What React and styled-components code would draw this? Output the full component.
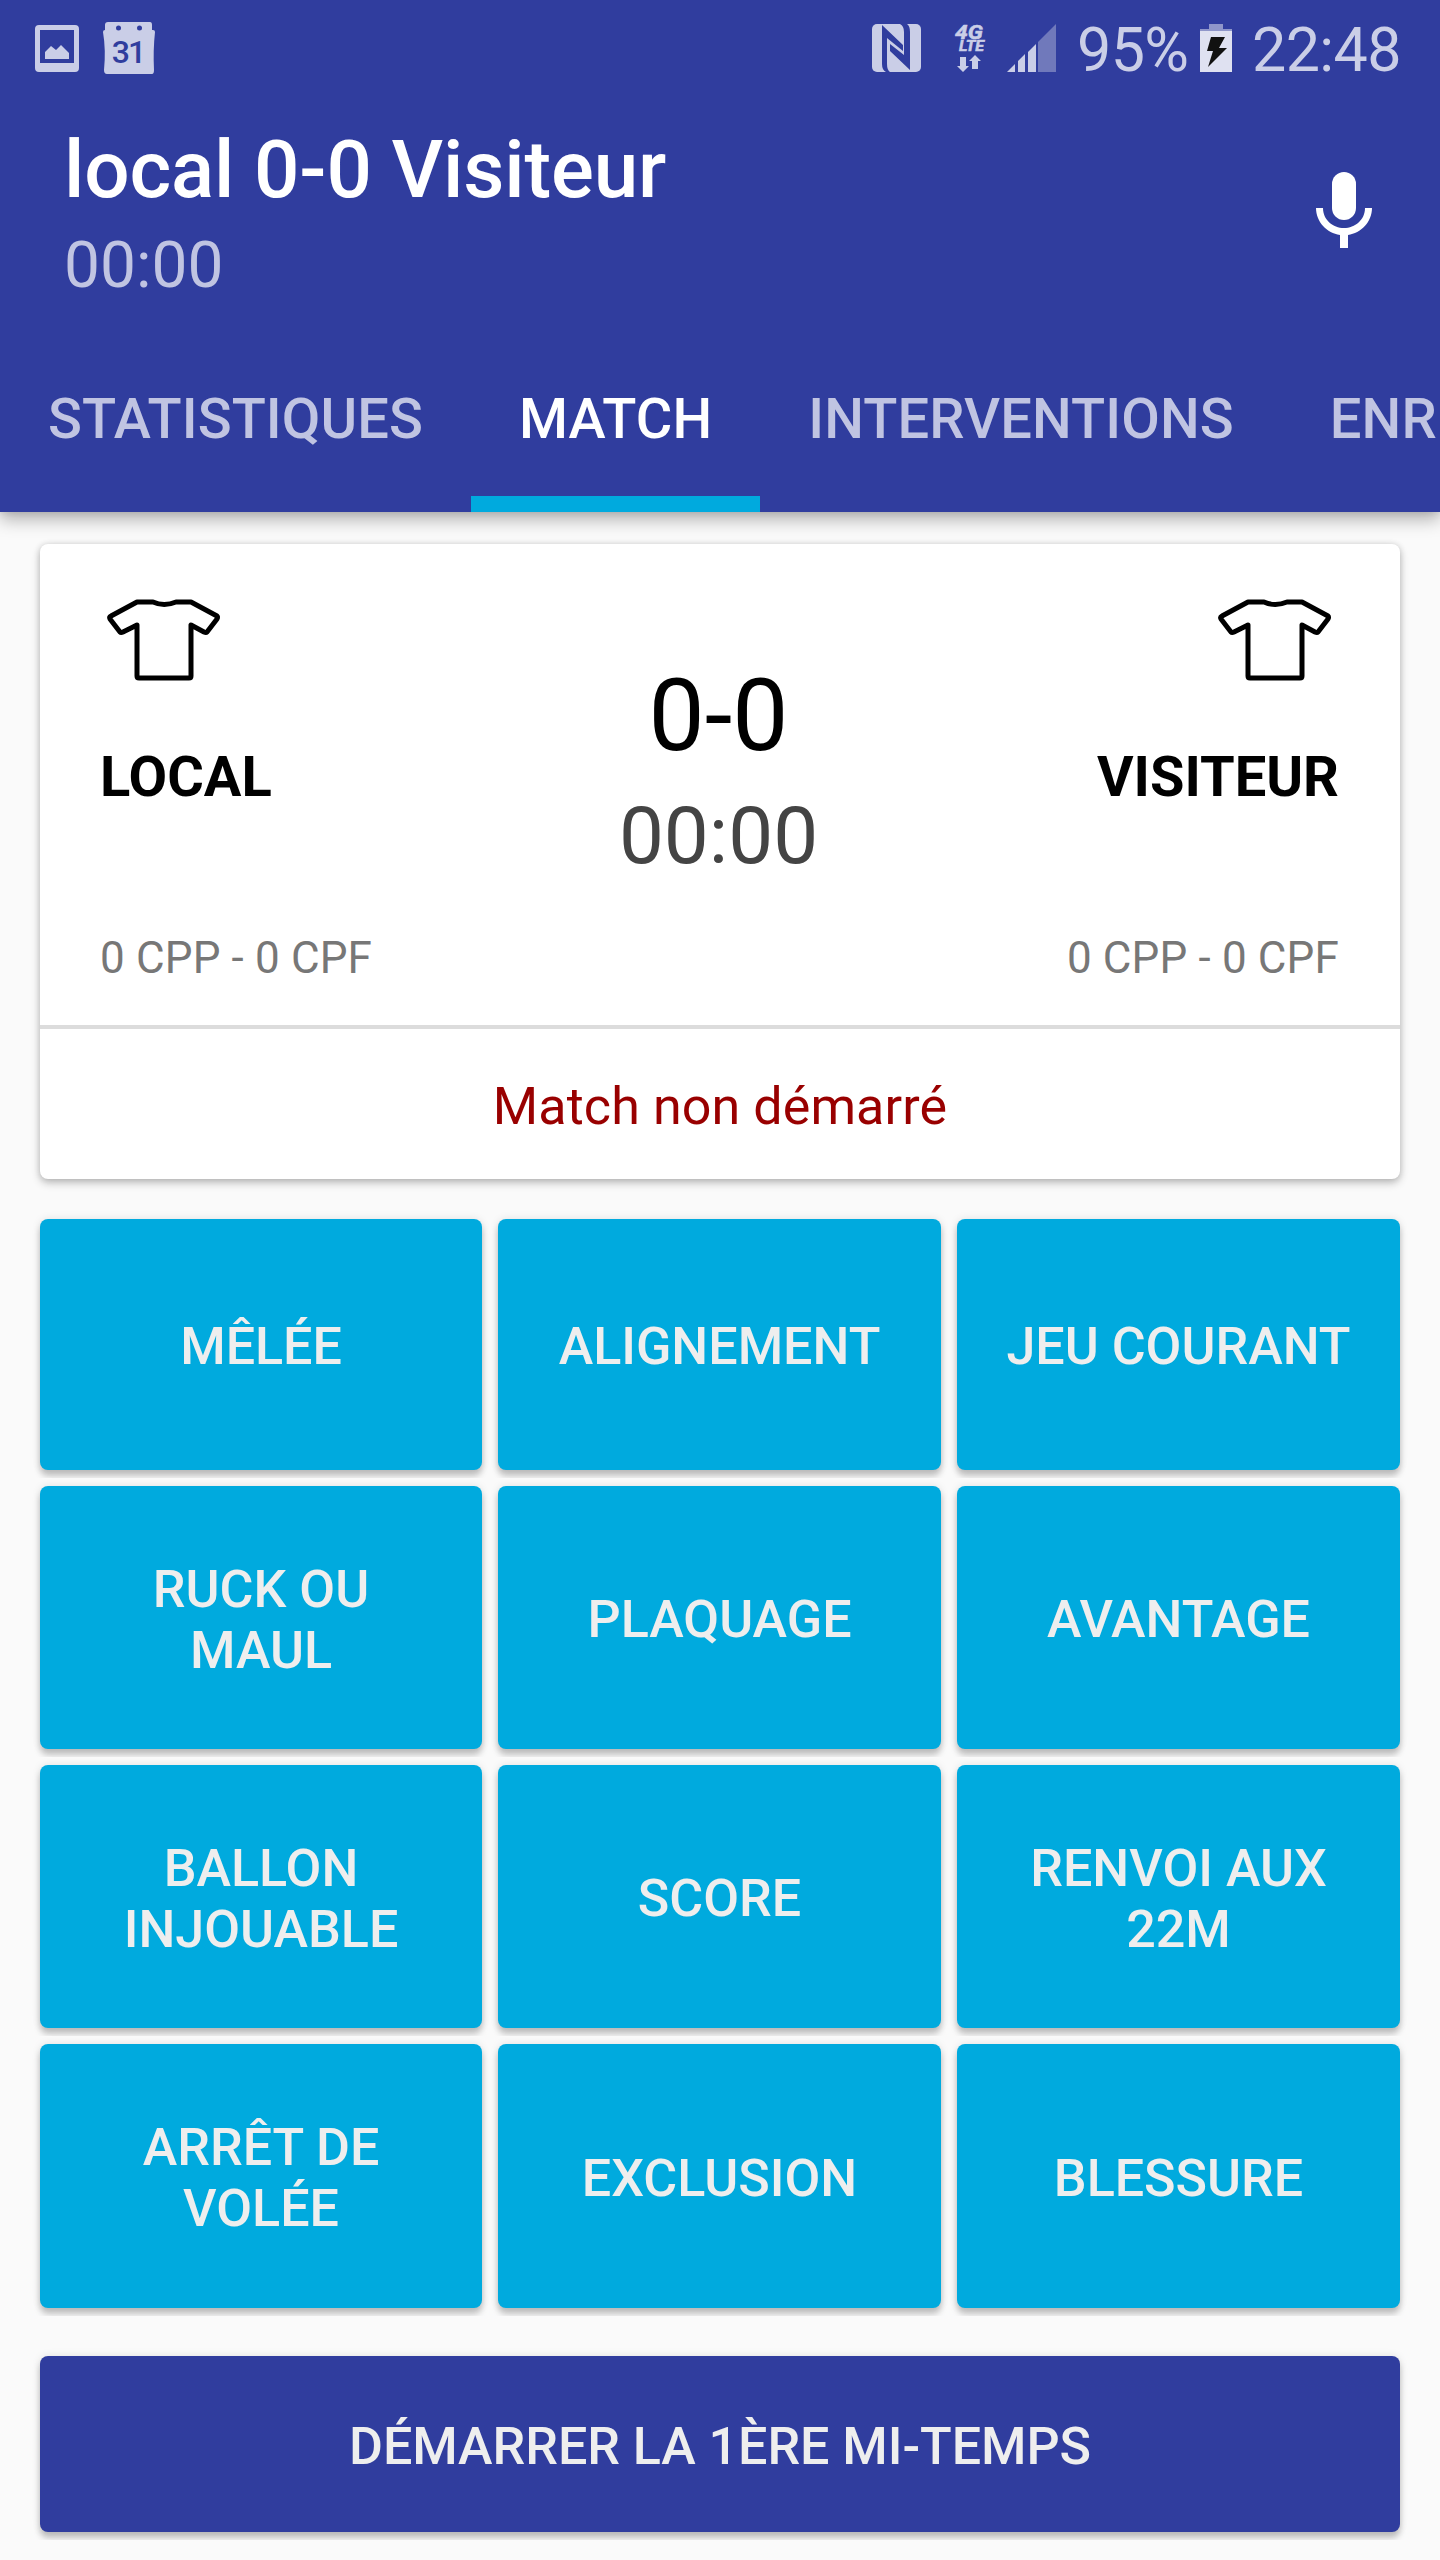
import React, { useState } from "react";
import styled, { createGlobalStyle } from "styled-components";

const GlobalStyle = createGlobalStyle`
  * {
    box-sizing: border-box;
  }

  body {
    margin: 0;
    background: #fafafa;
    font-family: Roboto, sans-serif;
  }
`;

const Screen = styled.div`
  width: 1440px;
  height: 2560px;
  background: #fafafa;
  overflow: hidden;
`;

const Header = styled.header`
  height: 512px;
  background: #303d9e;
  box-shadow: 0 8px 16px rgba(0, 0, 0, 0.28), 0 0 8px rgba(0, 0, 0, 0.12);
`;

const StatusBar = styled.div`
  display: flex;
  justify-content: space-between;
  align-items: center;
  height: 96px;
  padding: 0 38px 0 35px;
  color: #cacee7;
`;

const StatusGroup = styled.div`
  display: flex;
  align-items: center;
`;

const StatusIcon = styled.svg`
  display: block;
  flex: none;
  overflow: visible;
  margin-right: ${(props) => props.$gap || 0}px;
`;

const StatusText = styled.span`
  font-size: 61px;
  line-height: 70px;
  padding-top: 4px;
  width: ${(props) => props.$width}px;
  letter-spacing: -0.6px;
  white-space: nowrap;
`;

const Toolbar = styled.div`
  display: flex;
  justify-content: space-between;
  height: 224px;
  padding: 27px 60px 0 64px;
`;

const Title = styled.h1`
  margin: 0;
  color: #fff;
  font-size: 80px;
  font-weight: 500;
  letter-spacing: -0.15px;
  line-height: 94px;
`;

const Subtitle = styled.p`
  margin: 11px 0 0;
  color: #c0c4e2;
  font-size: 64px;
  line-height: 75px;
`;

const MicButton = styled.button`
  width: 72px;
  height: 96px;
  margin-top: 40px;
  padding: 0;
  border: 0;
  background: none;
`;

const Tabs = styled.nav`
  display: flex;
  height: 192px;
  overflow: hidden;
`;

const Tab = styled.button`
  flex: none;
  padding: 21px 48px 0;
  border: 0;
  border-bottom: 16px solid ${(props) => (props.$active ? "#00aade" : "transparent")};
  background: none;
  color: ${(props) => (props.$active ? "#fff" : "#c0c4e2")};
  font-family: inherit;
  font-size: 56px;
  font-weight: 500;
  letter-spacing: 0.1px;
  line-height: 66px;
  white-space: nowrap;
`;

const Content = styled.main`
  padding: 32px 40px 0;
`;

const Card = styled.section`
  height: 635px;
  background: #fff;
  border-radius: 8px;
  box-shadow: 0 4px 8px rgba(0, 0, 0, 0.24), 0 0 6px rgba(0, 0, 0, 0.12);
`;

const ScoreBoard = styled.div`
  display: grid;
  grid-template-columns: 1fr auto 1fr;
  height: 481px;
  padding: 0 61px 0 60px;
`;

const Team = styled.div`
  display: flex;
  flex-direction: column;
  align-items: ${(props) => (props.$right ? "flex-end" : "flex-start")};
  padding-top: 52px;
`;

const Jersey = styled.svg`
  display: block;
  width: 120px;
  height: 88px;
  margin: 0 3px 0 5px;
`;

const TeamName = styled.div`
  margin-top: 60px;
  color: #000;
  font-size: 56px;
  font-weight: 700;
  line-height: 66px;
`;

const Penalties = styled.div`
  margin-top: 122px;
  color: #777;
  font-size: 44px;
  letter-spacing: 0.15px;
  line-height: 52px;
`;

const Center = styled.div`
  padding: 113px 2px 0 0;
  text-align: center;
`;

const Score = styled.div`
  color: #000;
  font-size: 100px;
  line-height: 118px;
`;

const Timer = styled.div`
  margin-top: 14px;
  color: #444;
  font-size: 80px;
  line-height: 94px;
`;

const MatchState = styled.div`
  display: flex;
  align-items: center;
  justify-content: center;
  height: 154px;
  padding-top: 4px;
  border-top: 4px solid #dcdcdc;
  color: #990000;
  font-size: 52px;
  letter-spacing: 0.1px;
  line-height: 61px;
`;

const Actions = styled.div`
  display: grid;
  grid-template-columns: 442px 443px 443px;
  grid-template-rows: 251px 263px 263px 264px;
  gap: 16px;
  margin-top: 40px;
`;

const ActionButton = styled.button`
  padding: 4px 48px 0;
  border: 0;
  border-radius: 8px;
  background: ${(props) => (props.$primary ? "#303d9e" : "#00aade")};
  box-shadow: 0 6px 6px rgba(0, 0, 0, 0.22), 0 0 8px rgba(0, 0, 0, 0.1);
  /* the shadow is cut 8px under the button */
  clip-path: inset(-8px -8px -8px -8px);
  color: #eee;
  font-family: inherit;
  font-size: 52px;
  font-weight: 500;
  line-height: 61px;
`;

const StartButton = styled(ActionButton)`
  display: block;
  width: 100%;
  height: 176px;
  margin-top: 48px;
  letter-spacing: -0.05px;
`;

const tabs = ["STATISTIQUES", "MATCH", "INTERVENTIONS", "ENR"];

const actions = [
  "MÊLÉE",
  "ALIGNEMENT",
  "JEU COURANT",
  "RUCK OU MAUL",
  "PLAQUAGE",
  "AVANTAGE",
  "BALLON INJOUABLE",
  "SCORE",
  "RENVOI AUX 22M",
  "ARRÊT DE VOLÉE",
  "EXCLUSION",
  "BLESSURE",
];

function StatusIcons() {
  return (
    <StatusBar>
      <StatusGroup>
        <StatusIcon $gap={24} width="44" height="47" viewBox="0 0 44 47">
          <path
            fill="currentColor"
            fillRule="evenodd"
            d="M4 0h36a4 4 0 0 1 4 4v39a4 4 0 0 1-4 4H4a4 4 0 0 1-4-4V4a4 4 0 0 1 4-4zM5 5v33h34V5z"
          />
          <path fill="currentColor" d="M10 34v-7l6-6 5 4 5-5 8 8v6z" />
        </StatusIcon>
        <StatusIcon width="52" height="52" viewBox="0 0 52 52">
          <path
            fill="currentColor"
            d="M5 0h42q2 0 2 3v5h1q2 0 2 2-2 18-1 38 0 4-2 4H4q-3 0-3-4Q3 28 0 10q0-2 2-2V3q0-3 3-3z"
          />
          <circle cx="15.500" cy="6" r="2.500" fill="#303d9e" />
          <circle cx="36.500" cy="6" r="2.500" fill="#303d9e" />
          <text x="25" y="41" fill="#303d9e" fontSize="32" fontWeight="500" letterSpacing="-2" textAnchor="middle">
            31
          </text>
        </StatusIcon>
      </StatusGroup>
      <StatusGroup>
        <StatusIcon $gap={34} width="49" height="48" viewBox="0 0 49 48">
          <rect width="49" height="48" rx="5" fill="currentColor" />
          <path
            fill="#303d9e"
            d="M10 1L31 21V27L15 14V40Q15 46 18 48H14Q10 46 10 40ZM18 20L32 31V8Q32 2 28 0H35Q38 2 38 8V46L18 27Z"
          />
        </StatusIcon>
        <StatusIcon $gap={22} width="30" height="48" viewBox="0 0 30 48">
          <g fill="currentColor" stroke="currentColor" strokeWidth="0.5" fontWeight="700" fontStyle="italic">
            <text x="0" y="14.500" fontSize="20" textLength="28" lengthAdjust="spacingAndGlyphs">4G</text>
            <text x="4" y="26.500" fontSize="14" textLength="25" lengthAdjust="spacingAndGlyphs">LTE</text>
          </g>
          <path fill="currentColor" d="M5 33h6v9h3l-6 6-6-6h3zM17 45v-8h-3l6-6 6 6h-3v8z" />
        </StatusIcon>
        <StatusIcon $gap={20} width="50" height="48" viewBox="0 0 50 48">
          <path fill="#7079bb" d="M31 18L49 0v48H31z" />
          <path fill="currentColor" d="M0 48l8-8v8zM11 37l7-7v18h-7zM21 28l8-8v28h-8z" />
        </StatusIcon>
        <StatusText $width={123}>95%</StatusText>
        <StatusIcon $gap={20} width="32" height="48" viewBox="0 0 32 48">
          <path fill="#8f96ca" d="M9 0h14v5h9v2H0V5h9z" />
          <path fill="#dfe1f1" d="M0 7h32v41H0z" />
          <path fill="#111" d="M11 13h14l-6 11h8L8 43l5-16H7z" />
        </StatusIcon>
        <StatusText $width={150}>22:48</StatusText>
      </StatusGroup>
    </StatusBar>
  );
}

function TeamInfo({ name, penalties, right }) {
  return (
    <Team $right={right}>
      <Jersey viewBox="0 0 120 88" fill="none" stroke="#000" strokeWidth="5">
        <path
          strokeLinejoin="round"
          d="M32 6H48Q59 11 71 6H86L112 20Q113 21 112 23L102 36Q101 37 99 36L86 29V80Q86 82 84 82H34Q32 82 32 80V29L18 36Q16 37 15 36L5 23Q4 21 6 20Z"
        />
      </Jersey>
      <TeamName>{name}</TeamName>
      <Penalties>{penalties}</Penalties>
    </Team>
  );
}

function App() {
  const [activeTab, setActiveTab] = useState("MATCH");

  return (
    <Screen>
      <GlobalStyle />
      <Header>
        <StatusIcons />
        <Toolbar>
          <div>
            <Title>local 0-0 Visiteur</Title>
            <Subtitle>00:00</Subtitle>
          </div>
          <MicButton aria-label="Micro">
            <svg width="72" height="96" viewBox="0 0 72 96">
              <rect x="24" y="9" width="24" height="48" rx="12" fill="#fff" />
              <path
                fill="#fff"
                d="M8 45h7c0 12 10 20 21 20s21-8 21-20h7c0 14-11 25-24 27v13h-8V72C19 70 8 59 8 45z"
              />
            </svg>
          </MicButton>
        </Toolbar>
        <Tabs>
          {tabs.map((tab) => (
            <Tab key={tab} $active={tab === activeTab} onClick={() => setActiveTab(tab)}>
              {tab}
            </Tab>
          ))}
        </Tabs>
      </Header>
      <Content>
        <Card>
          <ScoreBoard>
            <TeamInfo name="LOCAL" penalties="0 CPP - 0 CPF" />
            <Center>
              <Score>0-0</Score>
              <Timer>00:00</Timer>
            </Center>
            <TeamInfo name="VISITEUR" penalties="0 CPP - 0 CPF" right />
          </ScoreBoard>
          <MatchState>Match non démarré</MatchState>
        </Card>
        <Actions>
          {actions.map((action) => (
            <ActionButton key={action}>{action}</ActionButton>
          ))}
        </Actions>
        <StartButton $primary>DÉMARRER LA 1ÈRE MI-TEMPS</StartButton>
      </Content>
    </Screen>
  );
}

export default App;
